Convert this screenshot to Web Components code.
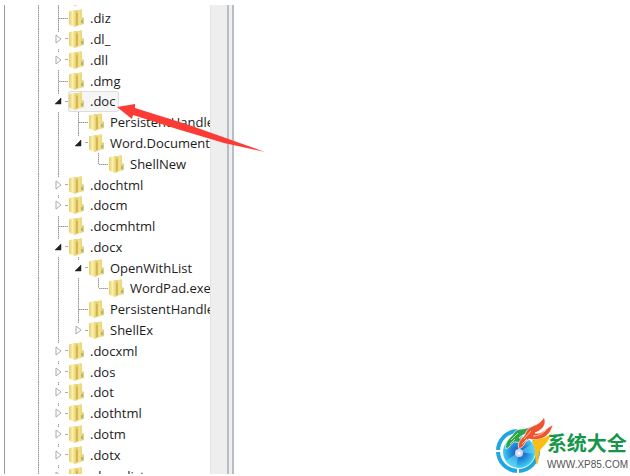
<!DOCTYPE html>
<html lang="zh">
<head>
<meta charset="utf-8">
<title>Registry Editor</title>
<style>
    html, body {
        height: 100%;
        margin: 0;
        overflow: hidden;
        background: #fff;
    }
</style>
</head>
<body>
<registry-page></registry-page>

<script>
// last: the guide stops at this row; through: the parent level goes on below it
const ROWS = [
    { name: '', depth: 0 },
    { name: '.diz', depth: 0 },
    { name: '.dl_', depth: 0, state: 'closed' },
    { name: '.dll', depth: 0, state: 'closed' },
    { name: '.dmg', depth: 0 },
    { name: '.doc', depth: 0, state: 'open', selected: true },
    { name: 'PersistentHandler', depth: 1 },
    { name: 'Word.Document.8', depth: 1, state: 'open', last: true },
    { name: 'ShellNew', depth: 2, last: true },
    { name: '.dochtml', depth: 0, state: 'closed' },
    { name: '.docm', depth: 0, state: 'closed' },
    { name: '.docmhtml', depth: 0 },
    { name: '.docx', depth: 0, state: 'open' },
    { name: 'OpenWithList', depth: 1, state: 'open' },
    { name: 'WordPad.exe', depth: 2, last: true, through: true },
    { name: 'PersistentHandler', depth: 1 },
    { name: 'ShellEx', depth: 1, state: 'closed', last: true },
    { name: '.docxml', depth: 0, state: 'closed' },
    { name: '.dos', depth: 0, state: 'closed' },
    { name: '.dot', depth: 0, state: 'closed' },
    { name: '.dothtml', depth: 0, state: 'closed' },
    { name: '.dotm', depth: 0, state: 'closed' },
    { name: '.dotx', depth: 0, state: 'closed' },
    { name: '.downlist', depth: 0, state: 'closed' }
];

class FolderIcon extends HTMLElement {
    constructor() {
        super();
        this.attachShadow({ mode: 'open' });
    }

    connectedCallback() {
        this.shadowRoot.innerHTML = `
            <style>
                :host { display: block; flex: none; width: 16px; height: 18px; }
                svg { display: block; }
            </style>
            <svg width="16" height="18" viewBox="0 0 16 18" aria-hidden="true">
                <defs>
                    <linearGradient id="front" x1="0" x2="1">
                        <stop offset="0" stop-color="#e6cd6c"/>
                        <stop offset=".45" stop-color="#fcf1ae"/>
                        <stop offset="1" stop-color="#e0c45c"/>
                    </linearGradient>
                    <linearGradient id="back" x1="0" x2="1">
                        <stop offset="0" stop-color="#c9a538"/>
                        <stop offset=".5" stop-color="#f5e38a"/>
                        <stop offset="1" stop-color="#e3cb6c"/>
                    </linearGradient>
                </defs>
                <path d="M6 2 L12 0 L13 1 V8 L15 9 V15 L8 17 L5 14Z" fill="url(#back)"/>
                <path d="M0 3 Q0 2 1 2 L6 1 Q8 1 8 3 V16 Q8 18 6 18 L1 16 Q0 16 0 15Z" fill="url(#front)"/>
                <path d="M8 4 V16" stroke="#b99630" stroke-width=".8"/>
                <path d="M13 11 V14" stroke="#7fb09a" stroke-width="1.4"/>
            </svg>
        `;
    }
}

class TreeRow extends HTMLElement {
    constructor() {
        super();
        this.attachShadow({ mode: 'open' });
    }

    connectedCallback() {
        const depth = Number(this.getAttribute('depth'));
        const state = this.getAttribute('state');
        const last = this.hasAttribute('last');
        let guides = '<i class="line"></i>';
        for (let level = 0; level < depth; level++) {
            const drawn = level === 0 || this.hasAttribute('through');
            guides += `<i class="${drawn ? 'line' : ''}"></i>`;
        }
        const arrow = state === 'open'
            ? '<path d="M8 7 V13 H2Z" fill="#222" stroke="#222" stroke-width=".5"/>'
            : '<path d="M3 6 L8 10 L3 14Z" fill="#fff" stroke="#aaa"/>';
        const joint = state
            ? `<span class="node"><svg width="11" height="20" viewBox="0 0 11 20" aria-hidden="true">${arrow}</svg></span>`
            : '<span class="twig"></span>';

        this.shadowRoot.innerHTML = `
            <style>
                :host { display: flex; min-height: 0; white-space: nowrap; }
                i {
                    flex: none;
                    width: 20px;
                }
                .line, .twig::before {
                    background: repeating-linear-gradient(#999 0 1px, #ccc 1px 2px) 0 0 / 1px 100% no-repeat;
                }
                .twig {
                    flex: none;
                    display: grid;
                    grid-template: 1fr 1fr / 1px 9px;
                    width: 10px;
                }
                .twig::before { content: ""; grid-row: 1 / ${last ? 2 : 3}; grid-column: 1; }
                .twig::after {
                    content: "";
                    grid-area: 2 / 2;
                    height: 1px;
                    background: repeating-linear-gradient(90deg, #999 0 1px, #ccc 1px 2px);
                }
                .node {
                    flex: none;
                    display: grid;
                    grid-template: 1fr / 10px;
                    width: 10px;
                    align-items: center;
                    background:
                        repeating-linear-gradient(#999 0 1px, #ccc 1px 2px) 0 0 / 1px 3px no-repeat,
                        linear-gradient(#aaa, #aaa) 100% 50% / 3px 1px no-repeat;
                }
                svg { display: block; margin-left: -5px; }
                .item {
                    display: flex;
                    align-items: center;
                    gap: 5px;
                    padding: 0 4px 0 1px;
                    border-radius: 3px;
                }
                :host([selected]) .item {
                    background: #f6f6f6;
                    box-shadow: inset 0 0 0 1px #dedede;
                }
            </style>
            ${guides}
            ${joint}
            <span class="item"><folder-icon></folder-icon><slot></slot></span>
        `;
    }
}

class RegistryTree extends HTMLElement {
    constructor() {
        super();
        this.attachShadow({ mode: 'open' });
    }

    connectedCallback() {
        this.shadowRoot.innerHTML = `
            <style>
                :host {
                    display: grid;
                    grid-auto-rows: 1fr;
                    margin: -18px 0 -12px;
                    padding-left: 33px;
                    font: 13px/18px "Open Sans", "Noto Sans", sans-serif;
                    color: #1c1c1c;
                }
            </style>
            ${ROWS.map(row => `<tree-row depth="${row.depth}"
                ${row.state ? `state="${row.state}"` : ''}
                ${row.last ? 'last' : ''}
                ${row.through ? 'through' : ''}
                ${row.selected ? 'selected' : ''}>${row.name}</tree-row>`).join('')}
        `;
    }
}

class SiteLogo extends HTMLElement {
    constructor() {
        super();
        this.attachShadow({ mode: 'open' });
    }

    connectedCallback() {
        this.shadowRoot.innerHTML = `
            <style>
                :host { display: flex; align-items: flex-end; }
                svg { display: block; margin-right: -2px; overflow: visible; }
                .words { display: grid; }
                .name {
                    font: 700 20px/26px "Noto Sans CJK SC", sans-serif;
                    color: #16964a;
                }
                .url {
                    font: 10px/18px "Liberation Sans", sans-serif;
                    color: #555;
                }
            </style>
            <svg width="60" height="61" viewBox="0 0 60 61" aria-hidden="true">
                <defs>
                    <radialGradient id="disc">
                        <stop offset="0" stop-color="#1556b8"/>
                        <stop offset=".5" stop-color="#2384d6"/>
                        <stop offset="1" stop-color="#43d0f6"/>
                    </radialGradient>
                </defs>
                <circle cx="29" cy="38" r="20" fill="none" stroke="#23a5e0" stroke-width="4"/>
                <path d="M4 38 H16 M29 50 V62 M29 14 V24" stroke="#fff" stroke-width="2"/>
                <circle cx="30" cy="39" r="16" fill="url(#disc)"/>
                <path d="M30 39 L17 48 Q21 54 27 55Z M30 39 L43 31 Q46 36 46 41Z" fill="#6ce4fb" opacity=".5"/>
                <circle cx="30" cy="40" r="4" fill="#d6d6ee"/>
                <circle cx="30" cy="40" r="1.5" fill="#fff"/>
                <path d="M17 36 C15 28 22 25 25 20 C28 14 34 18 43 13 C40 22 33 21 30 25 C38 26 40 22 44 19 C43 28 33 31 27 29 C23 28 22 34 17 36Z" fill="#2da34b" stroke="#fff" stroke-width=".7"/>
                <path d="M22 27 L29 20 M21 31 L26 26" stroke="#b6deb4"/>
                <path d="M30 36 C27 27 35 26 37 19 C41 11 50 14 55 4 C59 13 51 18 46 20 C53 22 58 14 64 12 C60 26 49 28 40 26 C35 28 37 33 30 36Z" fill="#ec5530" stroke="#fff" stroke-width=".7"/>
                <path d="M35 26 L42 18 M33 31 L38 26 M44 23 Q52 23 57 17" stroke="#ffc4a4" fill="none"/>
                <path d="M43 29 C45 25 54 28 63 20 C59 29 56 32 52 36 C48 41 51 47 48 52 C45 46 48 38 43 29Z" fill="#fbbe18"/>
            </svg>
            <div class="words">
                <span class="name">系统大全</span>
                <span class="url">WWW.XP85.COM</span>
            </div>
        `;
    }
}

class RegistryPage extends HTMLElement {
    constructor() {
        super();
        this.attachShadow({ mode: 'open' });
    }

    connectedCallback() {
        this.shadowRoot.innerHTML = `
            <style>
                :host {
                    display: flex;
                    justify-content: space-between;
                    align-items: flex-end;
                    box-sizing: border-box;
                    height: 100%;
                    padding: 5px 2px 2px 4px;
                    position: relative;
                }
                .pane {
                    display: grid;
                    grid-template-columns: 205px 17px 7px;
                    align-self: stretch;
                    min-height: 0;
                    border-left: 1px solid #969ba5;
                }
                .view { display: grid; min-height: 0; min-width: 0; overflow: hidden; }
                .view registry-tree {
                    background: repeating-linear-gradient(#999 0 1px, #ccc 1px 2px) 33px 0 / 1px 100% no-repeat;
                }
                .track { background: #eee; border-left: 1px solid #e4e4e4; box-sizing: border-box; }
                .split { background: #f0f0f0; border: solid #b8bcc4; border-width: 0 2px; box-sizing: border-box; }
                .arrow { position: absolute; left: 114px; top: 98px; }
            </style>
            <div class="pane">
                <div class="view"><registry-tree></registry-tree></div>
                <div class="track"></div>
                <div class="split"></div>
            </div>
            <site-logo></site-logo>
            <svg class="arrow" width="154" height="56" viewBox="0 0 154 56" aria-hidden="true">
                <path d="M3 9 L21 6 L21 10 L75 27 L151 54 L110 45 L63 31 L19 17 L18 21Z" fill="#fc3b34"/>
            </svg>
        `;
    }
}

customElements.define('folder-icon', FolderIcon);
customElements.define('tree-row', TreeRow);
customElements.define('registry-tree', RegistryTree);
customElements.define('site-logo', SiteLogo);
customElements.define('registry-page', RegistryPage);
</script>
</body>
</html>
